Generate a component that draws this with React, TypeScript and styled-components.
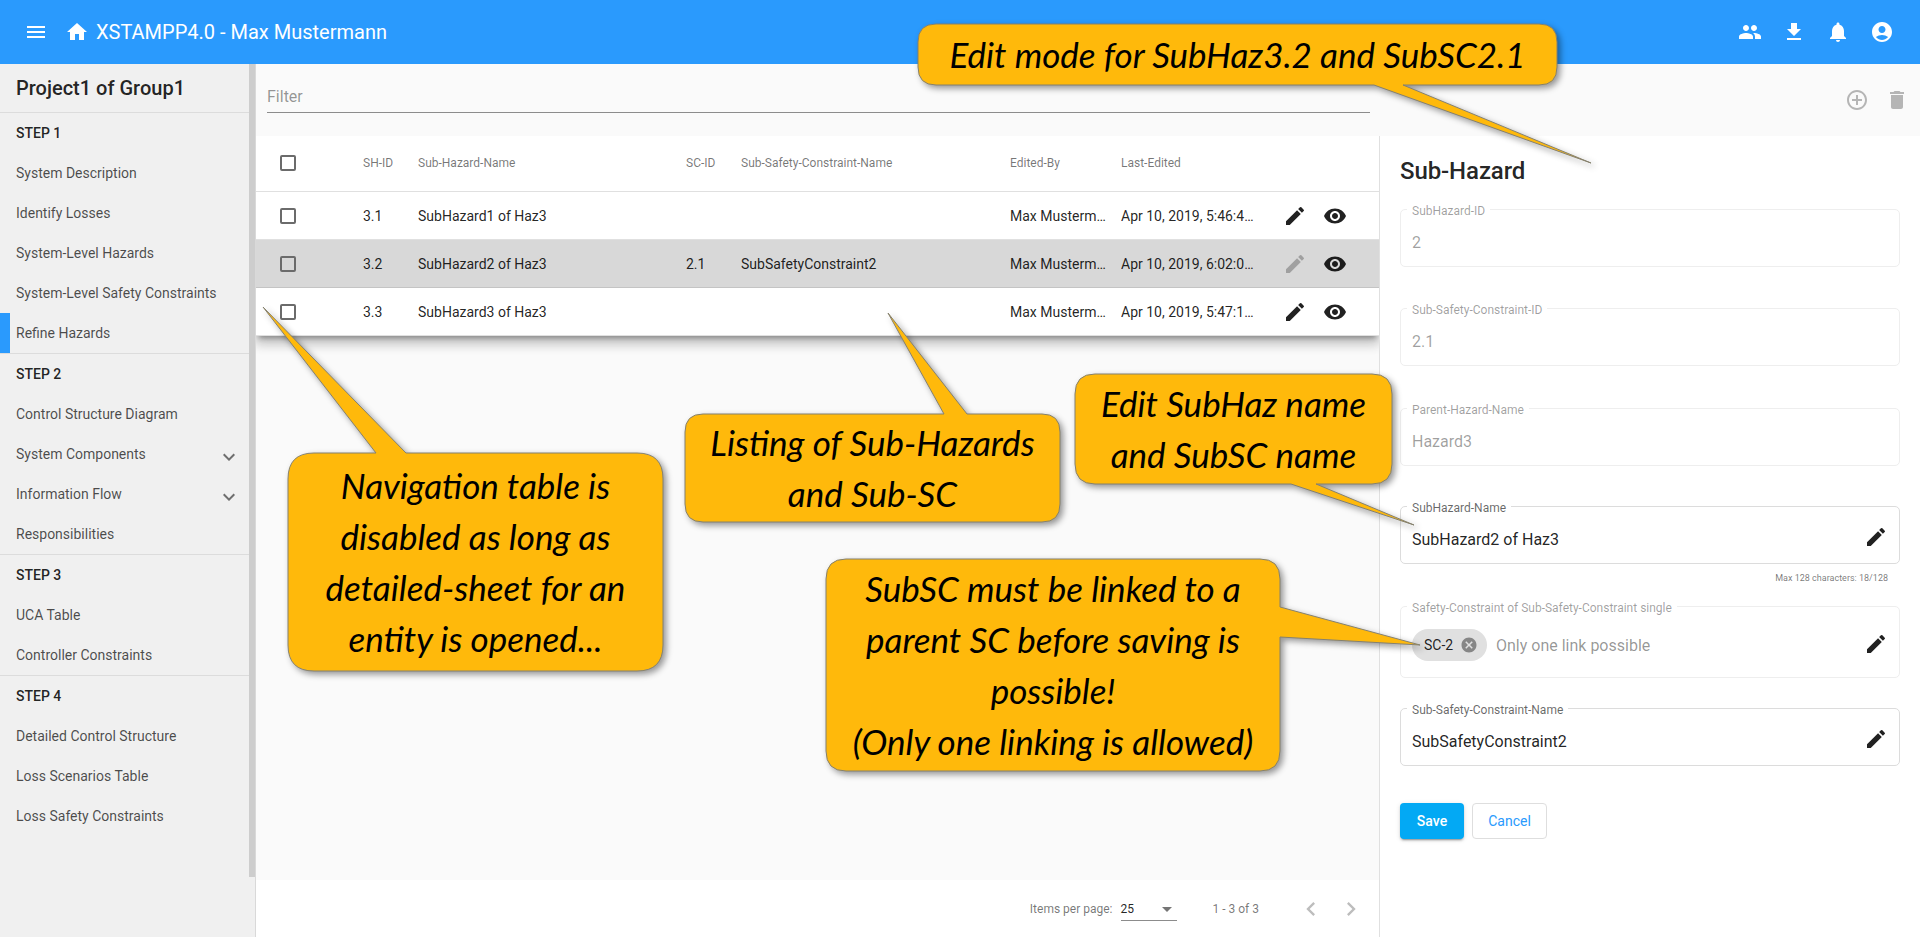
import React from "react";
import styled, { createGlobalStyle } from "styled-components";
import {
  MdMenu, MdHome, MdPeople, MdFileDownload, MdNotifications, MdAccountCircle,
  MdAddCircleOutline, MdDelete, MdEdit, MdVisibility, MdCancel, MdExpandMore,
  MdChevronLeft, MdChevronRight, MdArrowDropDown,
} from "react-icons/md";

const Global = createGlobalStyle`
  html, body { margin: 0; padding: 0; height: 100%; overflow: hidden; background: #fff; }
  body { font-family: Roboto, "Liberation Sans", sans-serif; color: rgba(0,0,0,.87); }
  * { box-sizing: border-box; }
`;

const Page = styled.div`
  position: relative; width: 1920px; height: 937px; overflow: hidden;
  display: flex; flex-direction: column;
`;
const Toolbar = styled.header`
  height: 64px; flex: none; background: #2a9afd; color: #fff;
  display: flex; align-items: center; padding: 0 16px 0 16px; position: relative; z-index: 3;
`;
const ToolIcon = styled.span<{ $w?: number }>`
  width: ${p => p.$w ?? 44}px; height: 40px; display: flex; align-items: center; justify-content: center; flex: none;
`;
const Title = styled.h1`
  margin: 0 0 0 -1px; font-size: 20px; font-weight: 400; letter-spacing: 0; line-height: 32px;
`;
const Spacer = styled.div`flex: 1;`;

const Body = styled.div`flex: 1; display: flex; min-height: 0;`;

const Sidebar = styled.aside`
  width: 256px; flex: none; background: #f0f0f0; display: flex; border-right: 1px solid #d9d9d9;
  position: relative; z-index: 2;
`;
const SideContent = styled.nav`width: 249px; flex: none;`;
const ScrollThumb = styled.div`width: 6px; height: 813px; background: #cdcdcd; flex: none;`;
const SideHead = styled.div`
  height: 49px; padding: 0 16px; border-bottom: 1px solid #dcdcdc; display: flex; align-items: center;
  font-size: 20px; font-weight: 500; color: rgba(0,0,0,.87);
`;
const Step = styled.div`
  height: 40px; padding: 0 16px; display: flex; align-items: center; font-size: 14px; font-weight: 500;
  color: rgba(0,0,0,.87);
`;
const Item = styled.div<{ $active?: boolean }>`
  position: relative; height: 40px; padding: 0 16px; display: flex; align-items: center; justify-content: space-between;
  font-size: 14px; color: rgba(0,0,0,.7);
  ${p => p.$active ? `box-shadow: inset 10px 0 0 #2a9afd;` : ""}
`;
const Chevron = styled(MdExpandMore)`
  color: rgba(0,0,0,.54); font-size: 24px; margin: 6px -8px 0 0;
`;
const SideDivider = styled.hr`margin: 0; border: 0; height: 1px; background: #dcdcdc;`;

const Main = styled.main`flex: 1; display: flex; flex-direction: column; min-width: 0; background: #fafafa;`;
const FilterBar = styled.div`
  height: 72px; flex: none; background: #fafafa; display: flex; position: relative; z-index: 2;
  padding: 0 11px 0 11px;
`;
const FilterField = styled.div`
  width: 1103px; height: 49px; border-bottom: 1px solid #8c8c8c; display: flex; align-items: flex-end;
  padding-bottom: 6px; font-size: 16px; color: rgba(0,0,0,.42);
`;
const FilterActions = styled.div`
  margin-left: auto; display: flex; align-items: center; height: 72px; gap: 16px; color: #b5b5b5;
`;
const FilterIcon = styled.span`
  width: 24px; height: 24px; display: flex; align-items: center; justify-content: center;
`;
const Split = styled.div`flex: 1; display: flex; min-height: 0;`;
const ListColumn = styled.section`
  width: 1123px; flex: none; display: flex; flex-direction: column;
`;
const Table = styled.div`
  background: #fff; flex: none; position: relative; z-index: 1;
  box-shadow: 0 5px 5px -3px rgba(0,0,0,.3), 0 8px 10px 1px rgba(0,0,0,.14), 0 3px 14px 2px rgba(0,0,0,.12);
`;
const cols = "83px 55px 268px 55px 269px 111px 140px 1fr";
const HeadRow = styled.div`
  display: grid; grid-template-columns: ${cols}; align-items: center; height: 56px; padding: 0 0 1px 24px;
  border-bottom: 1px solid #e0e0e0; font-size: 12px; color: rgba(0,0,0,.54);
`;
const Row = styled.div<{ $selected?: boolean }>`
  display: grid; grid-template-columns: ${cols}; align-items: center; height: 48px; padding-left: 24px;
  border-bottom: 1px solid #e0e0e0; font-size: 14px; color: rgba(0,0,0,.87);
  background: ${p => p.$selected ? "#d8d8d8" : "#fff"};
  ${p => p.$selected ? "border-bottom-color:#c4c4c4;" : ""}
`;
const Cell = styled.div`
  overflow: hidden; white-space: nowrap; text-overflow: ellipsis; padding-right: 8px;
`;
const DateCell = styled(Cell)`padding-right: 0;`;
const Check = styled.span`
  display: block; width: 16px; height: 16px; border: 2px solid #6b6b6b; border-radius: 2px;
`;
const Actions = styled.div`display: flex; padding-left: 14px;`;
const ActionIcon = styled.span<{ $muted?: boolean }>`
  width: 40px; height: 40px; display: flex; align-items: center; justify-content: center; font-size: 24px;
  color: ${p => p.$muted ? "rgba(0,0,0,.26)" : "rgba(0,0,0,.87)"};
`;
const Empty = styled.div`flex: 1; background: #fafafa;`;
const Paginator = styled.footer`
  height: 57px; flex: none; background: #fff; display: flex; align-items: center; justify-content: flex-end;
  padding-right: 8px; font-size: 12px; color: rgba(0,0,0,.54);
`;
const PageSelect = styled.div`
  width: 56px; height: 24px; margin: 1px 0 0 8px; display: flex; align-items: center; justify-content: space-between;
  border-bottom: 1px solid #8c8c8c; color: rgba(0,0,0,.87); font-size: 12px;
`;
const DropArrow = styled(MdArrowDropDown)`color: rgba(0,0,0,.54); font-size: 24px; margin-right: -2px;`;
const Range = styled.div`margin: 0 32px 0 36px;`;
const PageBtn = styled.span`
  width: 40px; height: 40px; display: flex; align-items: center; justify-content: center; color: #bdbdbd; font-size: 28px;
`;

const Detail = styled.aside`
  flex: 1; background: #fff; border-left: 1px solid #e0e0e0; padding: 0 20px 0 20px; position: relative; z-index: 2;
  display: flex; flex-direction: column;
`;
const DetailTitle = styled.h2`
  margin: 20px 0 0; font-size: 24px; font-weight: 500; letter-spacing: -.1px; line-height: 30px; color: rgba(0,0,0,.87);
`;
const Field = styled.div<{ $h?: number; $top: number; $on?: boolean }>`
  position: relative; height: ${p => p.$h ?? 58}px; margin-top: ${p => p.$top}px;
  border: 1px solid ${p => p.$on ? "#dcdcdc" : "#eeeeee"}; border-radius: 5px;
  display: flex; align-items: center; padding: 0 11px; font-size: 16px;
  color: ${p => p.$on ? "rgba(0,0,0,.87)" : "rgba(0,0,0,.38)"};
`;
const FieldLabel = styled.label<{ $on?: boolean }>`
  position: absolute; left: 6px; top: -6px; padding: 0 5px; background: #fff; font-size: 12px; line-height: 14px;
  color: ${p => p.$on ? "rgba(0,0,0,.6)" : "rgba(0,0,0,.38)"};
`;
const FieldValue = styled.span`flex: 1; padding-top: 8px;`;
const FieldEdit = styled(MdEdit)`color: rgba(0,0,0,.87); font-size: 24px; margin-top: 4px;`;
const Hint = styled.div`
  font-size: 9px; color: rgba(0,0,0,.54); text-align: right; padding-right: 12px; margin-top: 8px; line-height: 12px;
`;
const Chip = styled.span`
  display: inline-flex; align-items: center; height: 32px; width: 75px; padding-left: 12px; border-radius: 16px;
  background: #e0e0e0; font-size: 14px; color: rgba(0,0,0,.87); gap: 7px; margin-right: 9px; margin-top: 6px;
`;
const ChipClose = styled(MdCancel)`color: rgba(0,0,0,.4); font-size: 18px;`;
const Placeholder = styled.span`flex: 1; color: rgba(0,0,0,.42); margin-top: 6px;`;
const ButtonRow = styled.div`display: flex; gap: 8px; margin-top: 37px;`;
const SaveButton = styled.button`
  width: 64px; height: 36px; border: 0; border-radius: 4px; background: #03a9f4; color: #fff; padding-bottom: 2px;
  font: 500 14px Roboto, sans-serif;
  box-shadow: 0 3px 1px -2px rgba(0,0,0,.2), 0 2px 2px 0 rgba(0,0,0,.14), 0 1px 5px 0 rgba(0,0,0,.12);
`;
const CancelButton = styled.button`
  width: 75px; height: 36px; border: 1px solid #dedede; border-radius: 4px; background: #fff; color: #2a9afd; padding-bottom: 2px;
  font: 400 14px Roboto, sans-serif;
`;

type Tail = { side: "top" | "bottom" | "right"; a: number; b: number; tx: number; ty: number };
type Note = { x: number; y: number; w: number; h: number; r: number; tail: Tail; lines: string[] };

const bubblePath = ({ x, y, w, h, r, tail }: Note) => {
  const R = x + w, B = y + h;
  const t = tail;
  return [
    `M${x + r} ${y}`,
    t.side === "top" ? `L${t.a} ${y} L${t.tx} ${t.ty} L${t.b} ${y}` : "",
    `L${R - r} ${y} Q${R} ${y} ${R} ${y + r}`,
    t.side === "right" ? `L${R} ${t.a} L${t.tx} ${t.ty} L${R} ${t.b}` : "",
    `L${R} ${B - r} Q${R} ${B} ${R - r} ${B}`,
    t.side === "bottom" ? `L${t.b} ${B} L${t.tx} ${t.ty} L${t.a} ${B}` : "",
    `L${x + r} ${B} Q${x} ${B} ${x} ${B - r} L${x} ${y + r} Q${x} ${y} ${x + r} ${y} Z`,
  ].join(" ");
};

const notes: Note[] = [
  { x: 918, y: 24, w: 639, h: 61, r: 18, tail: { side: "bottom", a: 1374, b: 1403, tx: 1591, ty: 163 }, lines: ["Edit mode for SubHaz3.2 and SubSC2.1"] },
  { x: 288, y: 453, w: 375, h: 218, r: 26, tail: { side: "top", a: 376, b: 406, tx: 263, ty: 307 }, lines: ["Navigation table is", "disabled as long as", "detailed-sheet for an", "entity is opened..."] },
  { x: 685, y: 414, w: 375, h: 108, r: 18, tail: { side: "top", a: 944, b: 967, tx: 888, ty: 313 }, lines: ["Listing of Sub-Hazards", "and Sub-SC"] },
  { x: 1075, y: 374, w: 317, h: 110, r: 20, tail: { side: "bottom", a: 1291, b: 1316, tx: 1414, ty: 525 }, lines: ["Edit SubHaz name", "and SubSC name"] },
  { x: 826, y: 559, w: 454, h: 212, r: 20, tail: { side: "right", a: 607, b: 637, tx: 1420, ty: 645 }, lines: ["SubSC must be linked to a", "parent SC before saving is", "possible!", "(Only one linking is allowed)"] },
];

const BubbleArt = styled.svg`
  position: absolute; inset: 0; z-index: 5; pointer-events: none;
  filter: drop-shadow(3px 3px 3px rgba(0,0,0,.4));
`;
const NoteText = styled.div<{ $x: number; $y: number; $w: number; $h: number }>`
  position: absolute; z-index: 6; left: ${p => p.$x}px; top: ${p => p.$y}px; width: ${p => p.$w}px; height: ${p => p.$h}px;
  display: flex; flex-direction: column; align-items: center; justify-content: center;
  font-family: Lato, "Open Sans", sans-serif; font-style: italic; font-size: 35px; line-height: 51px; color: #000; white-space: nowrap;
`;

const rows = [
  { id: "3.1", name: "SubHazard1 of Haz3", sc: "", ssc: "", date: "Apr 10, 2019, 5:46:43 PM" },
  { id: "3.2", name: "SubHazard2 of Haz3", sc: "2.1", ssc: "SubSafetyConstraint2", date: "Apr 10, 2019, 6:02:04 PM", selected: true },
  { id: "3.3", name: "SubHazard3 of Haz3", sc: "", ssc: "", date: "Apr 10, 2019, 5:47:12 PM" },
];

const groups: { step: string; items: { label: string; more?: boolean; active?: boolean }[] }[] = [
  { step: "STEP 1", items: [{ label: "System Description" }, { label: "Identify Losses" }, { label: "System-Level Hazards" }, { label: "System-Level Safety Constraints" }, { label: "Refine Hazards", active: true }] },
  { step: "STEP 2", items: [{ label: "Control Structure Diagram" }, { label: "System Components", more: true }, { label: "Information Flow", more: true }, { label: "Responsibilities" }] },
  { step: "STEP 3", items: [{ label: "UCA Table" }, { label: "Controller Constraints" }] },
  { step: "STEP 4", items: [{ label: "Detailed Control Structure" }, { label: "Loss Scenarios Table" }, { label: "Loss Safety Constraints" }] },
];

export default function App() {
  return (
    <Page>
      <Global />
      <Toolbar>
        <ToolIcon $w={40}><MdMenu size={24} /></ToolIcon>
        <ToolIcon $w={41}><MdHome size={24} /></ToolIcon>
        <Title>XSTAMPP4.0 - Max Mustermann</Title>
        <Spacer />
        <ToolIcon><MdPeople size={24} /></ToolIcon>
        <ToolIcon><MdFileDownload size={24} /></ToolIcon>
        <ToolIcon><MdNotifications size={24} /></ToolIcon>
        <ToolIcon><MdAccountCircle size={24} /></ToolIcon>
      </Toolbar>
      <Body>
        <Sidebar>
          <SideContent>
            <SideHead>Project1 of Group1</SideHead>
            {groups.map((g, i) => (
              <React.Fragment key={g.step}>
                {i > 0 && <SideDivider />}
                <Step>{g.step}</Step>
                {g.items.map(it => (
                  <Item key={it.label} $active={it.active}>
                    {it.label}
                    {it.more && <Chevron />}
                  </Item>
                ))}
              </React.Fragment>
            ))}
          </SideContent>
          <ScrollThumb />
        </Sidebar>
        <Main>
          <FilterBar>
            <FilterField>Filter</FilterField>
            <FilterActions>
              <FilterIcon><MdAddCircleOutline size={24} /></FilterIcon>
              <FilterIcon><MdDelete size={24} /></FilterIcon>
            </FilterActions>
          </FilterBar>
          <Split>
            <ListColumn>
              <Table>
                <HeadRow>
                  <Check />
                  <Cell>SH-ID</Cell>
                  <Cell>Sub-Hazard-Name</Cell>
                  <Cell>SC-ID</Cell>
                  <Cell>Sub-Safety-Constraint-Name</Cell>
                  <Cell>Edited-By</Cell>
                  <DateCell>Last-Edited</DateCell>
                  <div />
                </HeadRow>
                {rows.map(r => (
                  <Row key={r.id} $selected={r.selected}>
                    <Check />
                    <Cell>{r.id}</Cell>
                    <Cell>{r.name}</Cell>
                    <Cell>{r.sc}</Cell>
                    <Cell>{r.ssc}</Cell>
                    <Cell>Max Mustermann</Cell>
                    <DateCell>{r.date}</DateCell>
                    <Actions>
                      <ActionIcon $muted={r.selected}><MdEdit /></ActionIcon>
                      <ActionIcon><MdVisibility /></ActionIcon>
                    </Actions>
                  </Row>
                ))}
              </Table>
              <Empty />
              <Paginator>
                Items per page:
                <PageSelect>25<DropArrow /></PageSelect>
                <Range>1 - 3 of 3</Range>
                <PageBtn><MdChevronLeft /></PageBtn>
                <PageBtn><MdChevronRight /></PageBtn>
              </Paginator>
            </ListColumn>
            <Detail>
              <DetailTitle>Sub-Hazard</DetailTitle>
              <Field $top={23}><FieldLabel>SubHazard-ID</FieldLabel><FieldValue>2</FieldValue></Field>
              <Field $top={41}><FieldLabel>Sub-Safety-Constraint-ID</FieldLabel><FieldValue>2.1</FieldValue></Field>
              <Field $top={42}><FieldLabel>Parent-Hazard-Name</FieldLabel><FieldValue>Hazard3</FieldValue></Field>
              <Field $top={40} $on><FieldLabel $on>SubHazard-Name</FieldLabel><FieldValue>SubHazard2 of Haz3</FieldValue><FieldEdit /></Field>
              <Hint>Max 128 characters: 18/128</Hint>
              <Field $top={22} $h={72}>
                <FieldLabel>Safety-Constraint of Sub-Safety-Constraint single</FieldLabel>
                <Chip>SC-2<ChipClose /></Chip>
                <Placeholder>Only one link possible</Placeholder>
                <FieldEdit />
              </Field>
              <Field $top={30} $on><FieldLabel $on>Sub-Safety-Constraint-Name</FieldLabel><FieldValue>SubSafetyConstraint2</FieldValue><FieldEdit /></Field>
              <ButtonRow>
                <SaveButton>Save</SaveButton>
                <CancelButton>Cancel</CancelButton>
              </ButtonRow>
            </Detail>
          </Split>
        </Main>
      </Body>
      <BubbleArt width={1920} height={937} viewBox="0 0 1920 937">
        {notes.map((n, i) => (
          <path key={i} d={bubblePath(n)} fill="#ffb90b" stroke="#85816f" strokeWidth={1} />
        ))}
      </BubbleArt>
      {notes.map((n, i) => (
        <NoteText key={i} $x={n.x} $y={n.y} $w={n.w} $h={n.h}>
          {n.lines.map(l => <span key={l}>{l}</span>)}
        </NoteText>
      ))}
    </Page>
  );
}
